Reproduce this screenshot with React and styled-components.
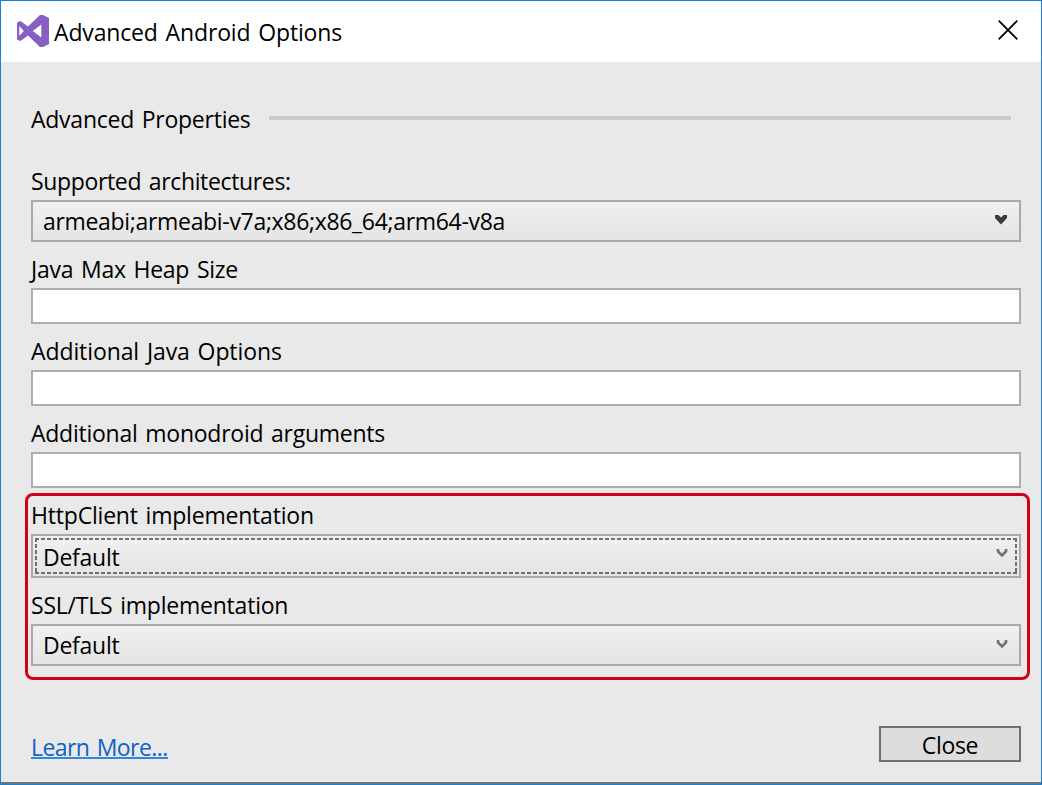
import React from "react";
import styled, { createGlobalStyle } from "styled-components";

const GlobalStyle = createGlobalStyle`
  * { box-sizing: border-box; }
  body { margin: 0; background: #e9e9e9; }
`;

const Dialog = styled.div`
  display: flex;
  flex-direction: column;
  width: 1042px;
  height: 785px;
  overflow: hidden;
  border: 1px solid #1a80d2;
  background: #e9e9e9;
  color: #000;
  font: 23px/32px "Open Sans", "Noto Sans", sans-serif;
  white-space: nowrap;
`;

const TitleBar = styled.header`
  display: flex;
  align-items: flex-start;
  flex: none;
  height: 61px;
  padding: 14px 23px 0 16px;
  background: #fff;
`;

const Title = styled.h1`
  flex: 1;
  margin: 1px 0 0 5px;
  font: inherit;
`;

const CloseIcon = styled.svg`
  margin-top: 5px;
`;

const Text = styled.span`
  letter-spacing: ${(p) => p.$track || 0}px;
  word-spacing: 2px;
`;

const Content = styled.main`
  flex: 1;
  display: flex;
  flex-direction: column;
  padding: 41px 20px 20px 30px;
  border-bottom: 2px solid #747474;
`;

const SectionHeading = styled.div`
  display: flex;
  justify-content: space-between;
  height: 32px;
  margin-bottom: 30px;
`;

const Rule = styled.div`
  width: 742px;
  height: 4px;
  margin: 13px 10px 0 0;
  background: #c9c9c9;
`;

const Field = styled.label`
  display: flex;
  flex-direction: column;
  gap: 3px;
  margin-bottom: ${(p) => p.$gap ?? 11}px;
`;

const Input = styled.input`
  width: 100%;
  height: 36px;
  padding: 0 10px;
  border: 2px solid #abadb3;
  border-radius: 0;
  outline: 0;
  background: #fff;
  font: inherit;
`;

const Combo = styled.div`
  display: flex;
  justify-content: space-between;
  height: ${(p) => (p.$focused ? 44 : 42)}px;
  padding: ${(p) => (p.$focused ? "2px" : "0 2px")};
  border: 2px solid #a9a9a9;
  background: linear-gradient(#f0f0f0, #e4e4e4);
`;

const ComboInner = styled.div`
  position: relative;
  display: flex;
  flex: 1;
  justify-content: space-between;
  padding: ${(p) => (p.$focused ? "3px 8px 0" : p.$bold ? "3px 9px 0 8px" : "3px 8px 0")};
`;

const FocusRect = styled.svg`
  position: absolute;
  inset: 0;
`;

const Chevron = styled.svg`
  flex: none;
  margin-top: ${(p) => p.$top}px;
`;

const Highlight = styled.section`
  margin: 0 -9px 0 -6px;
  padding: 3px 6px 11px 3px;
  border: 3px solid #d0021b;
  border-radius: 8px;
`;

const Footer = styled.footer`
  display: flex;
  justify-content: space-between;
  margin-top: 46px;
`;

const Link = styled.a`
  height: 28px;
  margin-top: 5px;
  border-bottom: 2px solid #3388d6;
  color: #0e62c9;
  text-decoration: none;
`;

const Button = styled.button`
  width: 142px;
  height: 36px;
  padding: 1px 0 0;
  border: 2px solid #707070;
  background: #ddd;
  color: #000;
  font: inherit;
  line-height: 32px;
`;

function Logo() {
  return (
    <svg width="32" height="32" viewBox="0 0 32 32" fill="#865fc5">
      <path
        fillRule="evenodd"
        d="M23 0h3l6 3v26l-6 3h-3L11 20.500 3.500 26 0 24.500V7.500L3.500 6 11 11.500zM2.300 11v10l4.500-5zM24.300 9.500 15.800 16l8.500 6.500z"
      />
    </svg>
  );
}

function DropDown({ value, track, focused, bold }) {
  return (
    <Combo $focused={focused}>
      <ComboInner $focused={focused} $bold={bold}>
        {focused && (
          <FocusRect width="982" height="36" fill="none" stroke="#707070" strokeWidth="2" strokeDasharray="4 2">
            <path d="M0 1H982M0 35H982M1 0V36M981 0V36" />
          </FocusRect>
        )}
        <Text $track={track}>{value}</Text>
        {bold ? (
          <Chevron $top={9} width="15" height="12" viewBox="0 0 15 12">
            <path d="M2 1h3.500L8 3.500 10.500 1H14v3L8 10.500 2 4z" fill="#3c3c3c" />
          </Chevron>
        ) : (
          <Chevron $top={focused ? 6 : 9} width="13" height="12" viewBox="0 0 13 12">
            <path d="M2 2v2.500L6 8.500 10 4.500V2" fill="none" stroke="#707070" strokeWidth="2.600" />
          </Chevron>
        )}
      </ComboInner>
    </Combo>
  );
}

export default function App() {
  return (
    <>
      <GlobalStyle />
      <Dialog>
        <TitleBar>
          <Logo />
          <Title><Text $track={-0.15}>Advanced Android Options</Text></Title>
          <CloseIcon width="20" height="20" viewBox="0 0 20 20" stroke="#000" strokeWidth="1.8">
            <path d="M.7.700 19.300 19.300M19.300.700.700 19.300" />
          </CloseIcon>
        </TitleBar>
        <Content>
          <SectionHeading>
            <Text $track={-0.25}>Advanced Properties</Text>
            <Rule />
          </SectionHeading>
          <Field>
            <Text $track={-0.35}>Supported architectures:</Text>
            <DropDown value="armeabi;armeabi-v7a;x86;x86_64;arm64-v8a" track={-0.32} bold />
          </Field>
          <Field>
            <Text $track={-0.25}>Java Max Heap Size</Text>
            <Input />
          </Field>
          <Field>
            <Text $track={-0.1}>Additional Java Options</Text>
            <Input />
          </Field>
          <Field $gap={5}>
            <Text $track={-0.25}>Additional monodroid arguments</Text>
            <Input />
          </Field>
          <Highlight>
            <Field>
              <Text $track={-0.2}>HttpClient implementation</Text>
              <DropDown value="Default" track={-0.25} focused />
            </Field>
            <Field $gap={0}>
              <Text $track={-0.22}>SSL/TLS implementation</Text>
              <DropDown value="Default" track={-0.25} />
            </Field>
          </Highlight>
          <Footer>
            <Link href="#"><Text $track={-0.58}>Learn More...</Text></Link>
            <Button type="button"><Text $track={-0.35}>Close</Text></Button>
          </Footer>
        </Content>
      </Dialog>
    </>
  );
}
